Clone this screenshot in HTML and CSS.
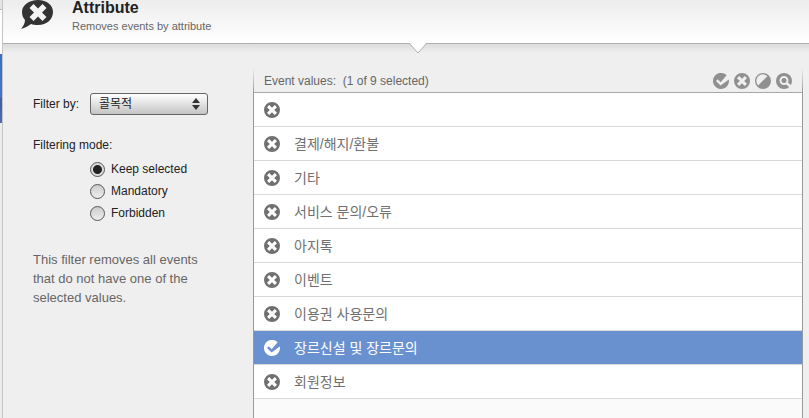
FILE: index.html
```html
<!DOCTYPE html>
<html lang="en">
  <head>
    <meta charset="UTF-8" />
    <meta name="viewport" content="width=device-width, initial-scale=1.0" />
    <title>Attribute filter</title>
    <link rel="stylesheet" href="styles.css">
  </head>
  <body>
    <svg class="symbols" aria-hidden="true">
      <symbol id="cross" viewBox="0 0 16 16">
        <path fill-rule="evenodd" d="M8 0a8 8 0 1 1 0 16A8 8 0 0 1 8 0zM5.2 3L3 5.2 5.8 8 3 10.8 5.2 13 8 10.2 10.8 13 13 10.8 10.2 8 13 5.2 10.8 3 8 5.8z" />
      </symbol>
      <symbol id="check" viewBox="0 0 16 16">
        <path d="M13.6 2.3A8 8 0 1 0 15.8 6.400L7.6 12.600 3 8 4.800 6.300 7.700 9.200z" />
      </symbol>
      <symbol id="invert" viewBox="0 0 16 16">
        <path fill-rule="evenodd" d="M8 0a8 8 0 1 1 0 16A8 8 0 0 1 8 0zM12.4 3.2A6.5 6.5 0 0 0 3.2 12.4z" />
      </symbol>
      <symbol id="search" viewBox="0 0 16 16">
        <circle cx="8" cy="8" r="8" />
        <circle cx="8" cy="7.5" r="3.500" fill="none" stroke="#efefef" stroke-width="2" />
        <path d="M10.500 10L14.500 13.500" fill="none" stroke="#efefef" stroke-width="2.500" />
      </symbol>
    </svg>
    <div class="app">
      <div class="sidebar">
        <div class="sidebarTop"></div>
        <div class="sidebarItem"></div>
      </div>
      <main class="panel">
        <header class="panelHeader">
          <svg class="logo" viewBox="0 0 34 30" aria-hidden="true">
            <path fill="#333" d="M17 0C26 0 32 5 32 12S26 25 17 25C14 25 12 24.600 10 24C7 26 4 28 0 29C2.500 26 4 23 4 20C2 18 1 15 1 12C1 5 8 0 17 0z" />
            <path fill="#f4f4f4" d="M12.500 4L17 8.500 21.500 4 25.500 8 21 12.500 25.500 17 21.500 21 17 16.500 12.500 21 8.500 17 13 12.500 8.500 8z" />
          </svg>
          <div class="titles">
            <h1>Attribute</h1>
            <p>Removes events by attribute</p>
          </div>
          <svg class="notch" viewBox="0 0 20 12" aria-hidden="true">
            <path fill="#fff" d="M1 0L10 11 19 0z" />
            <path fill="none" stroke="#b0b0b0" d="M1 1L10 11 19 1" />
          </svg>
        </header>
        <div class="content">
          <form class="settings">
            <div class="filterBy">
              <label for="attribute">Filter by:</label>
              <div class="selectCont">
                <select id="attribute">
                  <option>콜목적</option>
                </select>
                <svg class="arrows" viewBox="0 0 8 12" aria-hidden="true">
                  <path d="M4 0L8 5H0zM4 12L0 7H8z" />
                </svg>
              </div>
            </div>
            <fieldset class="mode">
              <legend>Filtering mode:</legend>
              <label><input type="radio" name="mode" checked />Keep selected</label>
              <label><input type="radio" name="mode" />Mandatory</label>
              <label><input type="radio" name="mode" />Forbidden</label>
            </fieldset>
            <p class="description">This filter removes all events that do not have one of the selected values.</p>
          </form>
          <section class="values">
            <div class="valuesHeader">
              <h2>Event values:&nbsp; (1 of 9 selected)</h2>
              <div class="tools">
                <button type="button" aria-label="Select all"><svg><use href="#check" /></svg></button>
                <button type="button" aria-label="Select none"><svg><use href="#cross" /></svg></button>
                <button type="button" aria-label="Invert selection"><svg><use href="#invert" /></svg></button>
                <button type="button" aria-label="Search"><svg><use href="#search" /></svg></button>
              </div>
            </div>
            <ul class="valuesList">
              <li><label><input type="checkbox" aria-label="Empty value" /><svg><use href="#cross" /></svg><span></span></label></li>
              <li><label><input type="checkbox" /><svg><use href="#cross" /></svg><span>결제/해지/환불</span></label></li>
              <li><label><input type="checkbox" /><svg><use href="#cross" /></svg><span>기타</span></label></li>
              <li><label><input type="checkbox" /><svg><use href="#cross" /></svg><span>서비스 문의/오류</span></label></li>
              <li><label><input type="checkbox" /><svg><use href="#cross" /></svg><span>아지톡</span></label></li>
              <li><label><input type="checkbox" /><svg><use href="#cross" /></svg><span>이벤트</span></label></li>
              <li><label><input type="checkbox" /><svg><use href="#cross" /></svg><span>이용권 사용문의</span></label></li>
              <li class="selected"><label><input type="checkbox" checked /><svg><use href="#check" /></svg><span>장르신설 및 장르문의</span></label></li>
              <li><label><input type="checkbox" /><svg><use href="#cross" /></svg><span>회원정보</span></label></li>
            </ul>
          </section>
        </div>
      </main>
    </div>
  </body>
</html>
```
FILE: styles.css
```css
* {
  box-sizing: border-box;
  margin: 0;
  padding: 0;
}
body {
  font-family: "Liberation Sans", "Noto Sans CJK KR", sans-serif;
  font-size: 12px;
  line-height: 16px;
  color: #222;
  background-color: #efefef;
}
.symbols {
  display: none;
}
.app {
  display: flex;
  min-height: 100vh;
}
.sidebar {
  width: 2px;
  background-color: #ececec;
}
.sidebarTop {
  height: 54px;
  background: linear-gradient(#e4e4e4 9px, #bbb 9px, #bbb 10px, #fff 10px);
}
.sidebarItem {
  height: 69px;
  background: linear-gradient(#3c6fc4, #4474c4 44px, #3f5f9e 44px, #4a6dae);
}
.panel {
  flex: 1;
  display: flex;
  flex-direction: column;
  border-left: 1px solid #c4c4c4;
}
.panelHeader {
  position: relative;
  display: flex;
  gap: 17px;
  height: 44px;
  padding-left: 18px;
  border-bottom: 1px solid #b0b0b0;
  background: linear-gradient(#ededed, #fff);
}
.logo {
  width: 34px;
  height: 30px;
}
.titles h1 {
  font-size: 16px;
  line-height: 16px;
}
.titles p {
  padding-top: 2px;
  font-size: 11px;
  color: #666;
}
.notch {
  position: absolute;
  top: 42px;
  left: calc(50% + 2px);
  width: 20px;
  height: 12px;
}
.content {
  flex: 1;
  display: flex;
  padding: 25px 6px 0 30px;
  background: linear-gradient(#dcdcdc, #efefef 9px);
}
.settings {
  flex: 0 0 220px;
  padding-top: 24px;
}
.filterBy {
  display: flex;
  align-items: center;
}
.filterBy > label {
  width: 57px;
}
.selectCont {
  position: relative;
}
.selectCont select {
  display: block;
  appearance: none;
  width: 118px;
  height: 22px;
  padding: 0 8px;
  font: inherit;
  color: #222;
  border: 1px solid #666;
  border-radius: 3px;
  background: linear-gradient(#fff, #c4c4c4);
}
.arrows {
  position: absolute;
  top: 5px;
  right: 8px;
  width: 8px;
  height: 12px;
  fill: #333;
  pointer-events: none;
}
.mode {
  padding-top: 22px;
  border: none;
}
.mode legend {
  float: left;
  width: 100%;
  margin-bottom: 5px;
}
.mode label {
  clear: both;
  display: flex;
  align-items: center;
  gap: 6px;
  height: 22px;
  padding-left: 57px;
}
.mode input {
  appearance: none;
  width: 15px;
  height: 15px;
  border: 1px solid #555;
  border-radius: 50%;
  background: linear-gradient(#ccc, #eee);
}
.mode input:checked {
  background: radial-gradient(circle, #222 4px, #ddd 5px);
}
.description {
  width: 180px;
  padding-top: 26px;
  font-size: 13px;
  line-height: 19px;
  color: #666;
}
.values {
  flex: 1;
  display: flex;
  flex-direction: column;
  border: solid #999;
  border-width: 0 1px;
  border-image: linear-gradient(#efefef, #999 24px) 1;
}
.valuesHeader {
  display: flex;
  align-items: center;
  justify-content: space-between;
  height: 24px;
  padding: 0 10px;
  border-bottom: 1px solid #a8a8a8;
}
.valuesHeader h2 {
  font-size: 12px;
  font-weight: normal;
  color: #666;
}
.tools {
  display: flex;
  gap: 5px;
}
.tools button {
  width: 16px;
  height: 16px;
  border: none;
  background: none;
  fill: #909090;
}
.tools svg,
.valuesList svg {
  display: block;
  width: 16px;
  height: 16px;
}
.valuesList {
  flex: 1;
  list-style: none;
  background-color: #fafafa;
}
.valuesList li {
  height: 34px;
  border-bottom: 1px solid #d9d9d9;
  color: #707070;
  fill: #707070;
  background-color: #fff;
}
.valuesList label {
  display: flex;
  align-items: center;
  gap: 14px;
  height: 100%;
  padding-left: 10px;
}
.valuesList input {
  position: absolute;
  opacity: 0;
}
.valuesList span {
  font-size: 14px;
}
.valuesList .selected {
  color: #fff;
  fill: #fff;
  background-color: #6991cf;
}
```
